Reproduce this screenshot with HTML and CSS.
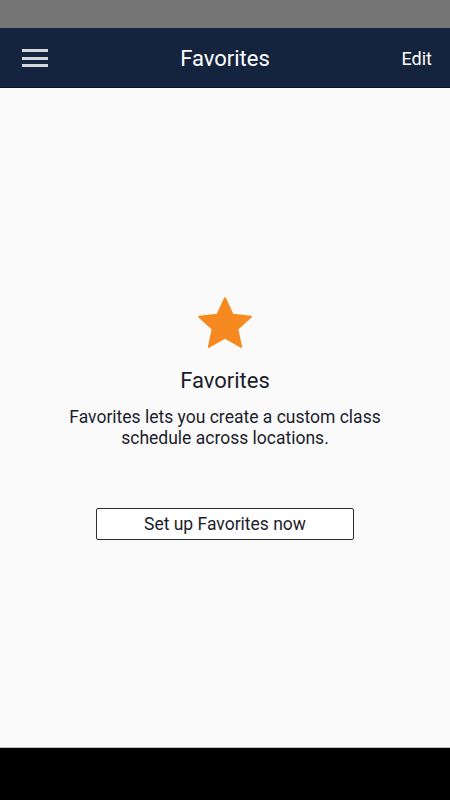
FILE: index.html
```html
<html lang="en">
  <head>
    <meta charset="UTF-8" />
    <title>Favorites</title>
    <meta name="viewport" content="width=device-width,initial-scale=1" />
    <link rel="stylesheet" href="styles.css">
  </head>
  <body>
    <div class="status-bar"></div>
    <header class="toolbar">
      <button class="menu" aria-label="Menu">
        <span></span><span></span><span></span>
      </button>
      <div class="toolbar-title">Favorites</div>
      <button class="edit">Edit</button>
    </header>
    <main class="content">
      <div class="empty">
        <svg class="star" width="58" height="56" viewBox="0 0 24 23">
          <path d="M12 0.8l3.2 6.9 7.5 0.8-5.6 5.1 1.6 7.4L12 17.2l-6.7 3.8 1.6-7.4-5.6-5.1 7.5-0.8z" fill="#f6891f" stroke="#f6891f" stroke-width="0.8" stroke-linejoin="round"/>
        </svg>
        <h1 class="empty-title">Favorites</h1>
        <p class="empty-text">Favorites lets you create a custom class schedule across locations.</p>
        <button class="setup">Set up Favorites now</button>
      </div>
    </main>
    <div class="nav-bar"></div>
  </body>
</html>
```

FILE: styles.css
```css
* {
  box-sizing: border-box;
}
body {
  margin: 0;
  height: 800px;
  display: flex;
  flex-direction: column;
  font-family: Roboto, "Noto Sans", sans-serif;
  background: #fafafa;
}
.status-bar {
  height: 28px;
  background: #757575;
}
.toolbar {
  height: 60px;
  background: #15243e;
  display: flex;
  align-items: center;
  justify-content: space-between;
  padding: 0 18px 0 22px;
  position: relative;
  border-bottom: 1px solid #0d1626;
}
.menu {
  width: 26px;
  height: 18px;
  padding: 0;
  border: none;
  background: none;
  display: flex;
  flex-direction: column;
  justify-content: space-between;
  margin-top: 1px;
}
.menu span {
  display: block;
  height: 3px;
  width: 26px;
  background: #d3d6dc;
}
.toolbar-title {
  position: absolute;
  left: 0;
  right: 0;
  text-align: center;
  color: #fff;
  font-size: 22px;
  margin-top: 2px;
  pointer-events: none;
}
.edit {
  border: none;
  background: none;
  color: #fff;
  font-family: inherit;
  font-size: 18px;
  padding: 0;
  margin-top: 2px;
}
.content {
  flex: 1;
  display: flex;
  justify-content: center;
  border-bottom: 1px solid #bdbdbd;
}
.empty {
  display: flex;
  flex-direction: column;
  align-items: center;
  padding-top: 208px;
}
.star {
  display: block;
}
.empty-title {
  margin: 16px 0 0;
  font-size: 22px;
  font-weight: normal;
  color: #1b1c2c;
}
.empty-text {
  margin: 14px 0 0;
  width: 340px;
  text-align: center;
  font-size: 17.5px;
  line-height: 21px;
  color: #1b1c2c;
}
.setup {
  margin-top: 59px;
  width: 258px;
  height: 32px;
  border: 1px solid #2c2c38;
  border-radius: 2px;
  background: #fff;
  font-family: inherit;
  font-size: 17.5px;
  color: #1b1c2c;
}
.nav-bar {
  height: 52px;
  background: #000;
}
```
